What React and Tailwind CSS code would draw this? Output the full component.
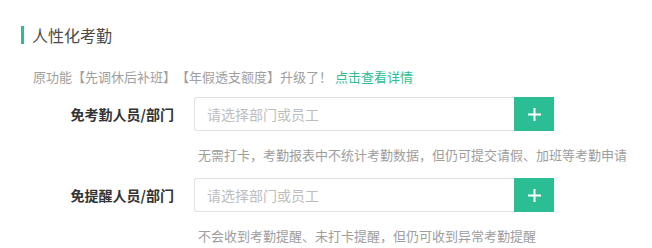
export default function App() {
  const font = "font-['Noto_Sans_CJK_SC','Noto_Sans',sans-serif]";
  const Row = ({ label, help, first }) => (
    <div>
      <div className={`flex items-center ${first ? "mt-[10px]" : "mt-[13px]"}`}>
        <div className="w-[174px] mr-[20px] text-right text-[14px] leading-[20px] font-bold text-[#333333]">
          {label}
        </div>
        <div className="flex h-[34px]">
          <div className="w-[320px] h-[34px] border border-[#e2e2e2] border-r-0 rounded-l-[3px] pl-[12px] flex items-center text-[14px] text-[#bdbdbd]">
            请选择部门或员工
          </div>
          <div className="w-[40px] h-[34px] bg-[#2bbd93] flex items-center justify-center">
            <svg width="13" height="13" viewBox="0 0 13 13">
              <rect x="5.5" y="0" width="2" height="13" fill="#ffffff" />
              <rect x="0" y="5.5" width="13" height="2" fill="#ffffff" />
            </svg>
          </div>
        </div>
      </div>
      <div className="mt-[14px] pl-[198px] text-[13px] leading-[20px] text-[#9e9e9e]">{help}</div>
    </div>
  );
  return (
    <div className={`w-[652px] h-[248px] bg-white overflow-hidden pt-[26px] [text-spacing-trim:space-all] ${font}`}>
      <div className="flex items-center pl-[21px] h-[18px]">
        <div className="w-[3px] h-[18px] bg-[#2bbd93]" />
        <div className="ml-[8px] text-[16px] leading-[18px] text-[#4a4a4a]">人性化考勤</div>
      </div>
      <div className="mt-[23px] pl-[33px] text-[13px] leading-[20px] text-[#a0a0a0]">
        原功能【先调休后补班】【年假透支额度】升级了！ <span className="text-[#2bbd93]">点击查看详情</span>
      </div>
      <Row
        first
        label="免考勤人员/部门"
        help="无需打卡，考勤报表中不统计考勤数据，但仍可提交请假、加班等考勤申请"
      />
      <Row label="免提醒人员/部门" help="不会收到考勤提醒、未打卡提醒，但仍可收到异常考勤提醒" />
    </div>
  );
}
